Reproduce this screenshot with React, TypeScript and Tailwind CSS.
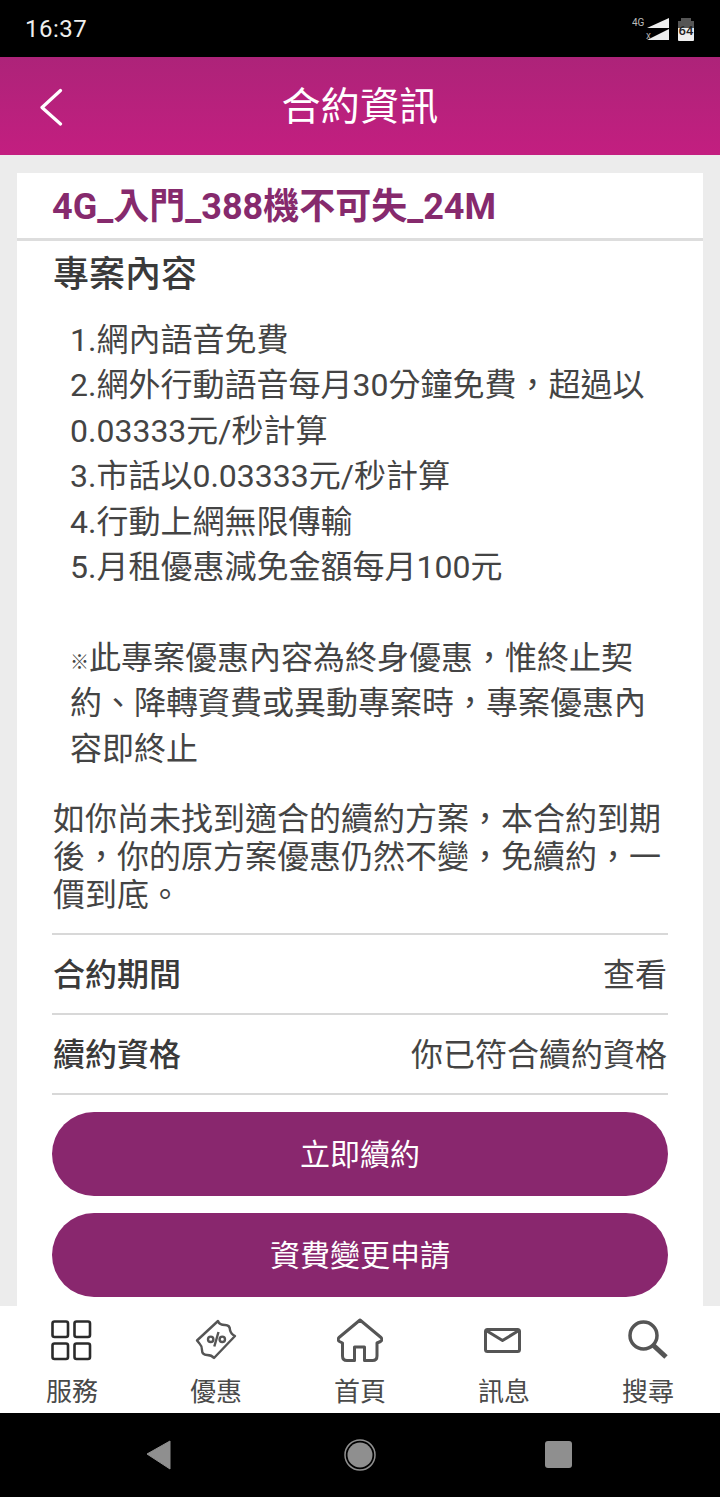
import React from "react";

const font = { fontFamily: 'Roboto, "Noto Sans CJK TC", sans-serif' };

function NavItem({ label, children }: { label: string; children: React.ReactNode }) {
  return (
    <div className="flex w-[144px] flex-col items-center">
      <div className="flex h-[68px] w-full items-center justify-center">{children}</div>
      <div className="mt-[3px] text-[26px] leading-[30px] text-[#4a4a4a]">{label}</div>
    </div>
  );
}

export default function App() {
  return (
    <div className="flex h-[1497px] w-[720px] flex-col overflow-hidden bg-[#ececec]" style={font}>
      <div className="relative flex h-[57px] shrink-0 items-center justify-between bg-black pl-[25px] pr-[26px] text-white">
        <span className="text-[24px] leading-none tracking-[0.5px] text-[#eeeeee]">16:37</span>
        <div className="mt-[2px] flex items-start gap-[8px]">
          <svg width="38" height="23" viewBox="0 0 38 23">
            <text x="0" y="8" fontSize="10" fill="#bbbbbb" fontFamily="Roboto">4G</text>
            <path d="M15 10 L37 0 V10 Z" fill="#eeeeee" />
            <path d="M15 22 L37 11 V22 Z" fill="#eeeeee" />
            <text x="14" y="21" fontSize="10" fill="#aaaaaa" fontFamily="Roboto">x</text>
          </svg>
          <div className="relative h-[23px] w-[16px]">
            <div className="absolute left-[3px] top-0 h-[3px] w-[10px] bg-[#555555]" />
            <div className="absolute inset-x-0 top-[3px] h-[20px] rounded-[1px] bg-[#eeeeee]" />
            <div className="absolute inset-x-0 top-[3px] h-[7px] bg-[#555555]" />
            <div className="absolute inset-x-0 top-[6px] text-center text-[13px] font-medium leading-[14px] text-[#222222]">64</div>
          </div>
        </div>
      </div>

      <div className="relative flex h-[98px] shrink-0 items-center justify-center bg-gradient-to-b from-[#ad2379] to-[#c31e80] pt-[2px]">
        <svg className="absolute left-[38px] top-[31px]" width="26" height="38" viewBox="0 0 26 38" fill="none">
          <path d="M22.5 2.5 L4 19.5 L22.5 36" stroke="#ffffff" strokeWidth="3.2" strokeLinecap="round" strokeLinejoin="round" />
        </svg>
        <span className="text-[39px] leading-none tracking-[0.3px] text-white">合約資訊</span>
      </div>

      <main className="min-h-0 flex-1 overflow-hidden px-[17px] pt-[18px]">
        <div className="bg-white pb-[20px]">
          <div className="flex h-[68px] items-center border-b-[3px] border-[#dddddd] pl-[35px] pt-[3px] text-[36px] font-bold leading-none text-[#862a6d]">
            4G_入門_388機不可失_24M
          </div>
          <div className="px-[36px]">
            <div className="mt-[12px] text-[36px] font-medium leading-[44px] text-[#3a3a3a]">專案內容</div>
            <div className="mt-[21px] pl-[17px] pr-[9px] text-[32px] leading-[45.4px] text-[#444444]">
              <div>1.網內語音免費</div>
              <div>2.網外行動語音每月30分鐘免費，超過以</div>
              <div>0.03333元/秒計算</div>
              <div>3.市話以0.03333元/秒計算</div>
              <div>4.行動上網無限傳輸</div>
              <div>5.月租優惠減免金額每月100元</div>
              <div className="h-[45.4px]" />
              <div><span className="inline-block w-[19px] text-center text-[19px] font-bold leading-[20px]">※</span>此專案優惠內容為終身優惠，惟終止契</div>
              <div>約、降轉資費或異動專案時，專案優惠內</div>
              <div>容即終止</div>
            </div>
            <div className="mt-[28px] text-[32px] leading-[38px] text-[#444444]">
              如你尚未找到適合的續約方案，本合約到期後，你的原方案優惠仍然不變，免續約，一價到底。
            </div>
            <div className="-mx-[1px] mt-[19px] border-t-2 border-[#d8d8d8]">
              <div className="flex h-[80px] items-center justify-between border-b-2 border-[#d8d8d8] px-[1px] pt-[2px] text-[32px]">
                <span className="font-medium text-[#3a3a3a]">合約期間</span>
                <span className="text-[#444444]">查看</span>
              </div>
              <div className="flex h-[80px] items-center justify-between border-b-2 border-[#d8d8d8] px-[1px] pt-[2px] text-[32px]">
                <span className="font-medium text-[#3a3a3a]">續約資格</span>
                <span className="text-[#444444]">你已符合續約資格</span>
              </div>
            </div>
            <div className="-mx-[1px] mt-[17px] flex h-[84px] items-center justify-center rounded-full bg-[#89276e] text-[30px] text-white">立即續約</div>
            <div className="-mx-[1px] mt-[17px] flex h-[84px] items-center justify-center rounded-full bg-[#89276e] text-[30px] text-white">資費變更申請</div>
          </div>
        </div>
      </main>

      <nav className="flex h-[107px] shrink-0 bg-white">
        <NavItem label="服務">
          <svg className="-ml-[1px]" width="41" height="41" viewBox="0 0 41 41" fill="none" stroke="#2b2b2b" strokeWidth="2.6">
            <rect x="1.5" y="1.5" width="15.5" height="15.5" rx="2" />
            <rect x="23.5" y="1.5" width="15.5" height="15.5" rx="2" />
            <rect x="1.5" y="23.5" width="15.5" height="15.5" rx="2" />
            <rect x="23.5" y="23.5" width="15.5" height="15.5" rx="2" />
          </svg>
        </NavItem>
        <NavItem label="優惠">
          <svg width="42" height="42" viewBox="-1 -1 42 42" fill="none" stroke="#555555" strokeWidth="2.4" strokeLinejoin="round">
            <path d="M1 20.5 L22 1 C23 4 26 5 29 5 C33 5 34 7 34 10 C34.500 12.500 36 14.500 39 16 L18 38 C16.500 36 14 35 11 35 C7.500 35 6 33 6 30 C6 26.500 4 24 3.500 23.500 Z" />
            <circle cx="14.7" cy="19.3" r="2.7" />
            <circle cx="26.3" cy="19.3" r="2.7" />
            <path d="M22.500 12 L18.300 26.500" />
          </svg>
        </NavItem>
        <NavItem label="首頁">
          <svg width="46" height="44" viewBox="0 0 46 44" fill="none" stroke="#555555" strokeWidth="3" strokeLinejoin="round">
            <path d="M23 2 L44 19.5 Q46 22 43.5 23.500 L40 25 V38 Q40 42.500 35.500 42.500 H27.500 V29 H17.500 V42.500 H10 Q5.500 42.500 5.500 38 V25 L2.500 23.500 Q0 22 2 19.500 Z" />
          </svg>
        </NavItem>
        <NavItem label="訊息">
          <svg className="-ml-[3px]" width="37" height="25" viewBox="0 0 37 25" fill="none" stroke="#555555" strokeWidth="3" strokeLinejoin="round">
            <rect x="1.5" y="1.5" width="34" height="22" rx="2" />
            <path d="M3 3 L18.500 12.500 L34 3" />
          </svg>
        </NavItem>
        <NavItem label="搜尋">
          <svg width="40" height="40" viewBox="0 0 40 40" fill="none" stroke="#555555" strokeLinecap="butt">
            <circle cx="15.500" cy="15.500" r="13.500" strokeWidth="3.500" />
            <path d="M25 25 L38 37" strokeWidth="5" />
          </svg>
        </NavItem>
      </nav>

      <div className="flex h-[84px] shrink-0 items-center justify-center bg-black">
        <div className="relative h-full w-full">
          <svg className="absolute left-[146px] top-[27px]" width="26" height="30" viewBox="0 0 26 30">
            <path d="M1 14 L24 1 V29 Z" fill="#8f8f8f" stroke="#8f8f8f" strokeLinejoin="round" />
          </svg>
          <svg className="absolute left-[344px] top-[26px]" width="32" height="32" viewBox="0 0 32 32">
            <circle cx="16" cy="16" r="15" fill="none" stroke="#8f8f8f" strokeWidth="1.5" />
            <circle cx="16" cy="16" r="12.500" fill="#8f8f8f" />
          </svg>
          <div className="absolute left-[545px] top-[28px] h-[27px] w-[27px] rounded-[3px] bg-[#8f8f8f]" />
        </div>
      </div>
    </div>
  );
}
